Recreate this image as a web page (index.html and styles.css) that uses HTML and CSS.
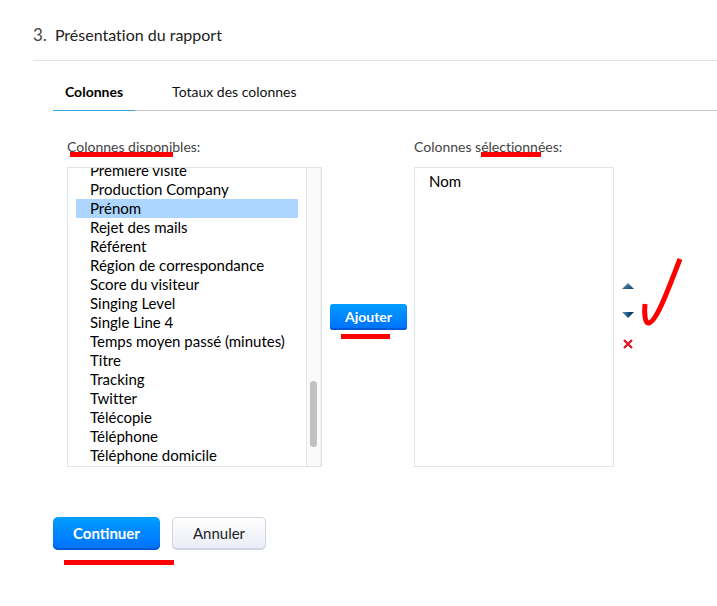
FILE: index.html
```html
<!DOCTYPE html>
<html lang="fr">
<head>
<meta charset="utf-8">
<title>Présentation du rapport</title>
<link rel="stylesheet" href="styles.css">
</head>
<body>
<main class="step">
  <h1 class="step-title"><span class="step-number">3.</span>Présentation du rapport</h1>
  <div class="step-body">
    <div class="tabs" role="tablist">
      <button class="tab tab-active" type="button" role="tab" aria-selected="true">Colonnes</button>
      <button class="tab" type="button" role="tab" aria-selected="false">Totaux des colonnes</button>
    </div>
    <form>
      <div class="picker">
        <div class="field available">
          <label class="field-label" for="available">Colonnes disponibles:<span class="mark mark-available"></span></label>
          <div class="list-frame">
            <select class="list list-available" id="available" multiple>
              <option>Première visite</option>
              <option>Production Company</option>
              <option selected>Prénom</option>
              <option>Rejet des mails</option>
              <option>Référent</option>
              <option>Région de correspondance</option>
              <option>Score du visiteur</option>
              <option>Singing Level</option>
              <option>Single Line 4</option>
              <option>Temps moyen passé (minutes)</option>
              <option>Titre</option>
              <option>Tracking</option>
              <option>Twitter</option>
              <option>Télécopie</option>
              <option>Téléphone</option>
              <option>Téléphone domicile</option>
            </select>
            <div class="track"><div class="thumb"></div></div>
          </div>
        </div>
        <div class="add">
          <button class="button primary small" type="button">Ajouter</button>
          <span class="mark mark-add"></span>
        </div>
        <div class="field selected">
          <label class="field-label" for="selected">Colonnes sélectionnées:<span class="mark mark-selected"></span></label>
          <div class="list-frame">
            <select class="list" id="selected" multiple>
              <option>Nom</option>
            </select>
          </div>
        </div>
        <div class="order">
          <button class="icon-button" type="button" aria-label="Monter">
            <svg width="12" height="6" viewBox="0 0 12 6"><defs><linearGradient id="up" x1="0" x2="1" y1="0" y2="1"><stop offset="0" stop-color="#6d9dc0"/><stop offset="1" stop-color="#0b3c63"/></linearGradient></defs><path d="M6 0L12 6H0Z" fill="url(#up)"/></svg>
          </button>
          <button class="icon-button" type="button" aria-label="Descendre">
            <svg width="12" height="6" viewBox="0 0 12 6"><defs><linearGradient id="down" x1="0" x2="1" y1="0" y2="0"><stop offset="0" stop-color="#5c95bd"/><stop offset="0.7" stop-color="#0b3c63"/></linearGradient></defs><path d="M0 0H12L6 6Z" fill="url(#down)"/></svg>
          </button>
          <button class="icon-button" type="button" aria-label="Supprimer">
            <svg width="10" height="10" viewBox="0 0 10 10"><path d="M1 1L9 9M9 1L1 9" stroke="#dc1320" stroke-width="2.3" fill="none"/></svg>
          </button>
          <svg class="check" width="42" height="72" viewBox="0 0 42 72"><path d="M4 48C3 58 4 68 8 67C16 65 28 31 39 3" fill="none" stroke="#f00" stroke-width="5"/></svg>
        </div>
      </div>
      <div class="actions">
        <button class="button primary" type="button">Continuer</button>
        <button class="button secondary" type="button">Annuler</button>
        <span class="mark mark-continue"></span>
      </div>
    </form>
  </div>
</main>
<script src="script.js"></script>
</body>
</html>
```
FILE: styles.css
```css
* {
  box-sizing: border-box;
}

body {
  margin: 0;
  background: #fff;
  color: #000;
  font-family: Lato, "Liberation Sans", sans-serif;
  font-size: 15px;
}

button,
select {
  font: inherit;
}

.step {
  padding: 20px 0 40px 33px;
}

.step-title {
  display: flex;
  align-items: center;
  gap: 8px;
  height: 41px;
  margin: 0;
  padding-bottom: 12px;
  border-bottom: 1px solid #e5e5e5;
  color: #222;
  font-size: 16px;
  font-variant-ligatures: none;
  font-weight: 400;
}

.step-number {
  color: #444;
  font-size: 17px;
}

.step-body {
  padding-left: 20px;
}

.tabs {
  display: flex;
  gap: 25px;
  height: 50px;
  border-bottom: 1px solid #ccc;
}

.tab {
  height: 50px;
  padding: 12px 12px 0;
  border: 0;
  border-bottom: 1px solid transparent;
  background: none;
  color: #111;
  font-size: 14px;
  line-height: 24px;
}

.tab-active {
  border-bottom-color: #36a9e1;
  color: #000;
  font-weight: 700;
}

.picker {
  display: flex;
  padding: 26px 0 0 14px;
}

.field-label {
  position: relative;
  display: block;
  height: 30px;
  color: #444;
  font-size: 14px;
  font-variant-ligatures: none;
  line-height: 20px;
}

.available {
  width: 255px;
}

.selected {
  width: 200px;
}

.list-frame {
  display: flex;
  height: 300px;
  border: 1px solid #dfe5eb;
}

.list {
  flex: 1;
  min-width: 0;
  height: 100%;
  padding: 4px 0;
  border: 0;
  outline: 0;
  background: #fff;
  color: #000;
  font-variant-ligatures: none;
  overflow: hidden;
}

.list option {
  min-height: 19px;
  padding: 0 14px;
  line-height: 19px;
}

.list-available {
  padding: 0 8px 1px;
}

.list option:checked {
  background: linear-gradient(#acd6ff, #acd6ff);
  color: #000;
}

.track {
  width: 15px;
  padding: 213px 3px 0;
  border-left: 1px solid #e7e7e7;
  border-right: 1px solid #eee;
  background: #fafafa;
}

.thumb {
  height: 66px;
  border-radius: 4px;
  background: #c1c1c1;
}

.add {
  position: relative;
  padding: 167px 7px 0 8px;
}

.button {
  height: 33px;
  padding: 0 20px;
  border: 1px solid transparent;
  border-radius: 5px;
}

.primary {
  padding-bottom: 2px;
  border: 0;
  background: linear-gradient(#009dff, #0070ff);
  box-shadow: inset 0 -2px 0 #0059d6;
  color: #fff;
  font-weight: 700;
}

.secondary {
  border-color: #cfd3e2;
  border-bottom-width: 2px;
  background: linear-gradient(#fff, #ebeef7);
  color: #222;
}

.small {
  height: 26px;
  padding: 0 15px 2px;
  border-radius: 3px;
  font-size: 14px;
}

.order {
  position: relative;
  display: flex;
  flex-direction: column;
  gap: 9px;
  padding: 139px 0 0 4px;
}

.icon-button {
  display: flex;
  align-items: center;
  justify-content: center;
  width: 20px;
  height: 20px;
  padding: 0;
  border: 0;
  background: none;
}

.actions {
  position: relative;
  display: flex;
  gap: 12px;
  padding-top: 50px;
}

.mark {
  position: absolute;
  height: 5px;
  background: #f00;
}

.mark-available {
  top: 15px;
  left: 3px;
  width: 103px;
}

.mark-selected {
  top: 15px;
  left: 67px;
  width: 60px;
}

.mark-add {
  top: 197px;
  left: 19px;
  width: 49px;
}

.mark-continue {
  top: 93px;
  left: 11px;
  width: 110px;
}

.check {
  position: absolute;
  top: 119px;
  left: 27px;
}
```
FILE: script.js
```js
const available = document.getElementById("available");
available.scrollTop = available.scrollHeight;
```
